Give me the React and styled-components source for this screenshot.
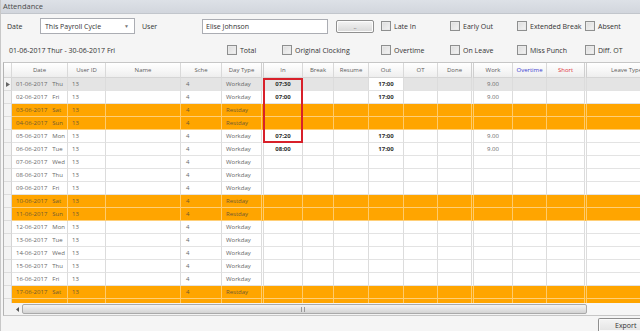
import React from 'react';
import styled, { createGlobalStyle } from 'styled-components';

const Global = createGlobalStyle`
  html, body { margin: 0; padding: 0; background: #f5f5f5; }
  body { font-family: "Open Sans", "Noto Sans", sans-serif; overflow: hidden; }
  * { box-sizing: border-box; }
`;

const COLS = '8px 56px 38px 75px 41px 42px 39px 31px 35px 35px 34px 36px 39px 34px 40px 80px';

const Window = styled.div`
  width: 640px;
  height: 331px;
  display: flex;
  flex-direction: column;
  background: #f5f5f5;
  overflow: hidden;
  border-left: 1px solid #c8c8c8;
`;

const TitleBar = styled.div`
  height: 14px;
  background: linear-gradient(#dde1e7, #d2d6dd);
  border-bottom: 1px solid #c2c6cc;
  color: #4a4a4a;
  font-size: 7.5px;
  line-height: 13px;
  padding-left: 2px;
`;

const FormRow = styled.div`
  display: flex;
  align-items: center;
  height: 16px;
  margin-top: ${p => p.$top}px;
  padding-left: ${p => p.$pad}px;
  font-size: 7px;
  color: #333;
`;

const Label = styled.div`
  width: ${p => p.$w}px;
  flex: none;
  white-space: nowrap;
`;

const Combo = styled.div`
  width: 95px;
  height: 16px;
  flex: none;
  background: #fff;
  border: 1px solid #abadb3;
  display: flex;
  align-items: center;
  justify-content: space-between;
  padding: 0 5px 0 4px;
  color: #333;
`;

const Caret = styled.span`
  font-size: 5px;
  color: #777;
`;

const TextBox = styled.div`
  width: 126px;
  height: 15px;
  flex: none;
  background: #fff;
  border: 1px solid #abadb3;
  display: flex;
  align-items: center;
  padding-left: 3px;
  color: #333;
`;

const DotsButton = styled.div`
  width: 38px;
  height: 13px;
  flex: none;
  margin: 0 7px 0 8px;
  border: 1px solid #8f8f8f;
  border-radius: 2px;
  background: linear-gradient(#f4f4f4, #e6e6e6 50%, #d8d8d8);
  box-shadow: inset 0 0 0 1px #fcfcfc;
  display: flex;
  align-items: flex-end;
  justify-content: center;
  font-size: 6px;
  line-height: 9px;
  color: #333;
`;

const Check = styled.label`
  width: ${p => p.$w}px;
  flex: none;
  display: flex;
  align-items: center;
  gap: 3px;
  white-space: nowrap;
`;

const Box = styled.span`
  width: 10px;
  height: 10px;
  flex: none;
  border: 1px solid #8e8f8f;
  background: linear-gradient(135deg, #dcdcdc, #f4f4f4);
  box-shadow: inset 0 0 0 1px #e9e9e9;
`;

const DateRange = styled.div`
  width: 219px;
  flex: none;
  padding-left: 1px;
  white-space: nowrap;
`;

const GridBox = styled.div`
  margin: 4px 0 0 2px;
  height: 254px;
  border-top: 1px solid #c6c6c6;
  border-left: 1px solid #b4b4b4;
  border-bottom: 1px solid #c6c6c6;
  background: #f4f4f4;
  position: relative;
  overflow: hidden;
  display: flex;
  flex-direction: column;
`;

const Row = styled.div`
  display: grid;
  grid-template-columns: ${COLS};
  height: ${p => (p.$head ? 15 : 13)}px;
  flex: none;
  font-size: 6px;
`;

const HeadCell = styled.div`
  background: linear-gradient(#ffffff, #f7f7f7 50%, #eeeeee);
  border-bottom: 1px solid #d5d5d5;
  border-right: ${p => (p.$double ? '3px double #cfcfcf' : '1px solid #d9d9d9')};
  color: ${p => p.$color || '#5c5c5c'};
  display: flex;
  align-items: center;
  justify-content: center;
  white-space: nowrap;
  overflow: hidden;
`;

const RowHeader = styled.div`
  background: #f3f3f3;
  border-right: 1px solid #d4d4d4;
  border-bottom: 1px solid #dcdcdc;
  display: flex;
  align-items: center;
  justify-content: center;
`;

const Cell = styled.div`
  background: ${p => p.$bg};
  border-bottom: 1px solid ${p => (p.$orange ? '#ffcf78' : '#e3e3e3')};
  border-right: ${p => (p.$double ? '3px double ' : '1px solid ')}${p => (p.$orange ? '#ffcb6a' : '#dcdcdc')};
  color: ${p => (p.$bold ? '#2d2d2d' : p.$orange ? '#6e5a34' : '#666')};
  font-weight: ${p => (p.$bold ? 700 : 400)};
  display: flex;
  align-items: center;
  justify-content: ${p => (p.$center ? 'center' : 'flex-start')};
  padding-left: ${p => (p.$center ? 0 : p.$pad ?? 4)}px;
  white-space: nowrap;
  overflow: hidden;
`;

const DayName = styled.span`
  margin-left: 5px;
`;

const Body = styled.div`
  height: 225px;
  flex: none;
  overflow: hidden;
  position: relative;
`;

const Highlight = styled.div`
  position: absolute;
  left: 259px;
  top: 0;
  width: 40px;
  height: 65px;
  border: 2px solid #d8202a;
  pointer-events: none;
`;

const ScrollBar = styled.div`
  height: 12px;
  flex: none;
  display: flex;
  align-items: stretch;
  background: #f3f3f3;
`;

const ScrollGutter = styled.div`
  width: 8px;
  flex: none;
  background: #f3f3f3;
`;

const ScrollArrow = styled.div`
  width: 10px;
  flex: none;
  display: flex;
  align-items: center;
  justify-content: center;
`;

const Thumb = styled.div`
  width: 565px;
  flex: none;
  margin: 1px 0;
  border: 1px solid #a9a9a9;
  border-radius: 2px;
  background: linear-gradient(#f3f3f3, #e4e4e4 50%, #d3d3d3);
  display: flex;
  align-items: center;
  justify-content: center;
`;

const Grip = styled.div`
  width: 4px;
  height: 5px;
  border-left: 1px solid #999;
  border-right: 1px solid #999;
  position: relative;
  left: -2px;
`;

const Track = styled.div`
  flex: 1;
  background: #f6f6f6;
`;

const Footer = styled.div`
  flex: 1;
  display: flex;
  justify-content: flex-end;
  align-items: flex-end;
`;

const ExportButton = styled.div`
  width: 50px;
  height: 13px;
  margin-right: -8px;
  border: 1px solid #8f8f8f;
  border-bottom: none;
  border-radius: 2px 2px 0 0;
  background: linear-gradient(#f4f4f4, #e4e4e4);
  box-shadow: inset 0 0 0 1px #fbfbfb;
  font-size: 7px;
  color: #333;
  display: flex;
  align-items: flex-end;
  padding-left: 16px;
  line-height: 10px;
`;

const days = ['Thu', 'Fri', 'Sat', 'Sun', 'Mon', 'Tue', 'Wed'];
const times = {
  1: ['07:30', '17:00'],
  2: ['07:00', '17:00'],
  5: ['07:20', '17:00'],
  6: ['08:00', '17:00'],
};
const rows = Array.from({ length: 17 }, (_, i) => {
  const n = i + 1;
  const day = days[i % 7];
  const off = day === 'Sat' || day === 'Sun';
  const t = times[n];
  return {
    date: `${String(n).padStart(2, '0')}-06-2017`,
    day,
    off,
    inT: t ? t[0] : '',
    out: t ? t[1] : '',
    work: n <= 2 || n === 5 || n === 6 ? '9.00' : '',
  };
});

const headers = [
  { t: '' }, { t: 'Date' }, { t: 'User ID' }, { t: 'Name' }, { t: 'Sche' },
  { t: 'Day Type', d: true }, { t: 'In' }, { t: 'Break' }, { t: 'Resume' },
  { t: 'Out' }, { t: 'OT' }, { t: 'Done', d: true }, { t: 'Work' },
  { t: 'Overtime', c: '#3a3ad0' }, { t: 'Short', c: '#e0303a', d: true },
  { t: 'Leave Type' },
];

const Arrow = () => (
  <svg width="4" height="5" viewBox="0 0 4 5"><polygon points="0,0 4,2.5 0,5" fill="#666" /></svg>
);

function DataRow({ r, idx, blank }) {
  const sel = idx === 0;
  const o = r.off;
  const bg = o ? '#ffa500' : sel ? '#e4e4e4' : '#ffffff';
  const c = { $bg: bg, $orange: o };
  const show = v => (blank ? null : v);
  return (
    <Row>
      <RowHeader>{sel && <Arrow />}</RowHeader>
      <Cell {...c}>{show(<>{r.date}<DayName>{r.day}</DayName></>)}</Cell>
      <Cell {...c}>{show('13')}</Cell>
      <Cell {...c} />
      <Cell {...c} $pad={5}>{show('4')}</Cell>
      <Cell {...c} $double>{show(o ? 'Restday' : 'Workday')}</Cell>
      <Cell {...c} $center $bold>{show(r.inT)}</Cell>
      <Cell {...c} />
      <Cell {...c} />
      <Cell {...c} $bg={sel ? '#ffffff' : bg} $center $bold>{show(r.out)}</Cell>
      <Cell {...c} />
      <Cell {...c} $double />
      <Cell {...c} $center>{show(r.work)}</Cell>
      <Cell {...c} />
      <Cell {...c} $double />
      <Cell {...c} />
    </Row>
  );
}

export default function App() {
  return (
    <Window>
      <Global />
      <TitleBar>Attendance</TitleBar>
      <FormRow $top={4} $pad={6}>
        <Label $w={33}>Date</Label>
        <Combo>This Payroll Cycle<Caret>▼</Caret></Combo>
        <Label $w={7} />
        <Label $w={60}>User</Label>
        <TextBox>Elise Johnson</TextBox>
        <DotsButton>..</DotsButton>
        <Check $w={69}><Box />Late In</Check>
        <Check $w={67}><Box />Early Out</Check>
        <Check $w={68}><Box />Extended Break</Check>
        <Check $w={55}><Box />Absent</Check>
      </FormRow>
      <FormRow $top={8} $pad={7}>
        <DateRange>01-06-2017 Thur - 30-06-2017 Fri</DateRange>
        <Check $w={55}><Box />Total</Check>
        <Check $w={99}><Box />Original Clocking</Check>
        <Check $w={69}><Box />Overtime</Check>
        <Check $w={67}><Box />On Leave</Check>
        <Check $w={68}><Box />Miss Punch</Check>
        <Check $w={55}><Box />Diff. OT</Check>
      </FormRow>
      <GridBox>
        <Row $head>
          {headers.map((h, i) => (
            <HeadCell key={i} $double={h.d} $color={h.c}>{h.t}</HeadCell>
          ))}
        </Row>
        <Body>
          {rows.map((r, i) => <DataRow key={i} r={r} idx={i} />)}
          <DataRow r={{ off: true }} idx={17} blank />
          <Highlight />
        </Body>
        <ScrollBar>
          <ScrollGutter />
          <ScrollArrow>
            <svg width="3" height="5" viewBox="0 0 3 5"><polygon points="3,0 0,2.5 3,5" fill="#555" /></svg>
          </ScrollArrow>
          <Thumb><Grip /></Thumb>
          <Track />
        </ScrollBar>
      </GridBox>
      <Footer>
        <ExportButton>Export</ExportButton>
      </Footer>
    </Window>
  );
}
